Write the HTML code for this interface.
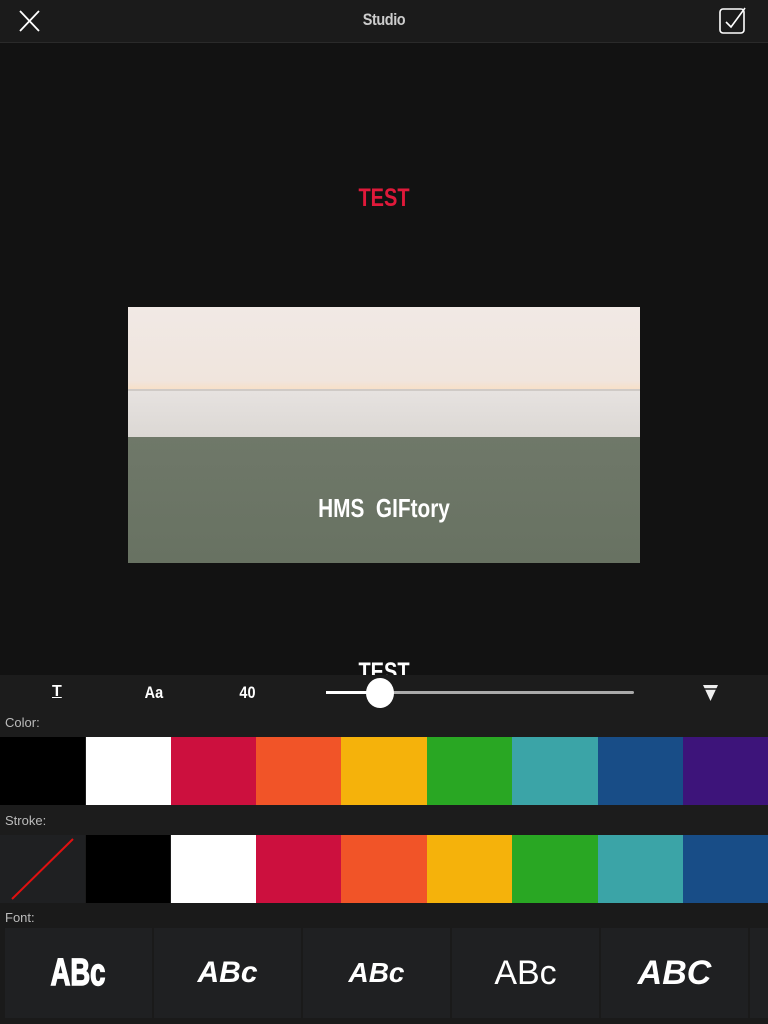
<!DOCTYPE html>
<html><head><meta charset="utf-8"><style>
*{margin:0;padding:0;box-sizing:border-box}
body{width:768px;height:1024px;background:#121212;position:relative;overflow:hidden;font-family:"Liberation Sans",sans-serif;color:#fff}
.abs{position:absolute}
.cond{font-family:"Liberation Sans Narrow","Liberation Sans",sans-serif;font-weight:bold}
.sw{position:absolute;height:68px}
.lbl{position:absolute;left:5px;font-size:13px;color:#bbb}
.ft{position:absolute;top:928px;width:147px;height:90px;background:#1f2022;display:flex;align-items:center;justify-content:center;font-size:34px;color:#fff}
</style></head><body>
<div class="abs" style="left:0;top:0;width:768px;height:43px;background:#1b1b1b;border-bottom:1px solid #2a2a2a"></div>
<svg class="abs" style="left:18px;top:10px" width="24" height="22"><path d="M2 1L21 21M21 1L2 21" stroke="#fff" stroke-width="1.8"/></svg>
<div class="abs cond" style="left:0;width:768px;top:10px;text-align:center;font-size:17px;color:#ccc;letter-spacing:-0.5px;transform:scaleX(0.85)">Studio</div>
<svg class="abs" style="left:718px;top:6px" width="30" height="30"><rect x="2" y="3" width="24" height="24" rx="3" fill="none" stroke="#fff" stroke-width="1.6"/><path d="M8 16L13 21L27 2" fill="none" stroke="#fff" stroke-width="1.6"/></svg>
<div class="abs cond" style="left:0;width:768px;top:184px;text-align:center;font-size:25px;color:#e0193a;transform:scaleX(0.8)">TEST</div>
<div class="abs" style="left:128px;top:307px;width:512px;height:256px;overflow:hidden;background:#6c7668">
<div class="abs" style="left:0;top:0;width:512px;height:82px;background:linear-gradient(#f1e9e5,#f0e5dd 90%,#f7e0c8)"></div>
<div class="abs" style="left:0;top:82px;width:512px;height:48px;background:linear-gradient(#e6e2e0,#dcd8d4);border-top:2px solid #cfcac6"></div>
<div class="abs" style="left:0;top:130px;width:512px;height:126px;background:linear-gradient(#6f7869,#687262)"></div>
<div class="abs cond" style="left:0;width:512px;top:186px;text-align:center;font-size:26px;color:#fff;transform:scaleX(0.8)">HMS&nbsp; GIFtory</div>
</div>
<div class="abs cond" style="left:0;width:768px;top:658px;height:17px;overflow:hidden;text-align:center;font-size:25px;line-height:28px;transform:scaleX(0.8)">TEST</div>
<div class="abs" style="left:0;top:675px;width:768px;height:228px;background:#1c1c1c"></div>
<div class="abs cond" style="left:52px;top:683px;font-size:16px;text-decoration:underline">T</div>
<div class="abs cond" style="left:143px;top:683px;font-size:17px;transform:scaleX(0.85)">Aa</div>
<div class="abs cond" style="left:238px;top:683px;font-size:17px;transform:scaleX(0.85)">40</div>
<div class="abs" style="left:326px;top:691px;width:308px;height:3px;background:#aaa;border-radius:2px"></div>
<div class="abs" style="left:326px;top:691px;width:50px;height:3px;background:#fff"></div>
<div class="abs" style="left:366px;top:678px;width:28px;height:30px;border-radius:50%;background:#fff"></div>
<svg class="abs" style="left:702px;top:684px" width="17" height="18"><path d="M1 1H16L8.5 17Z" fill="#eee"/><path d="M1 5H16" stroke="#1c1c1c" stroke-width="1.5"/></svg>
<div class="lbl" style="top:715px">Color:</div>
<div class="sw" style="left:0;top:737px;width:85px;background:#000"></div>
<div class="sw" style="left:86px;top:737px;width:85px;background:#fff"></div>
<div class="sw" style="left:171px;top:737px;width:85px;background:#cc103e"></div>
<div class="sw" style="left:256px;top:737px;width:85px;background:#f15428"></div>
<div class="sw" style="left:341px;top:737px;width:86px;background:#f5b20b"></div>
<div class="sw" style="left:427px;top:737px;width:85px;background:#29a723"></div>
<div class="sw" style="left:512px;top:737px;width:86px;background:#3ba4a7"></div>
<div class="sw" style="left:598px;top:737px;width:85px;background:#184d87"></div>
<div class="sw" style="left:683px;top:737px;width:85px;background:#3d147a"></div>
<div class="lbl" style="top:813px">Stroke:</div>
<div class="sw" style="left:0;top:835px;width:85px;background:#1f2022"></div>
<svg class="abs" style="left:0;top:835px" width="85" height="68"><path d="M12 64L73 4" stroke="#e01010" stroke-width="2"/></svg>
<div class="sw" style="left:86px;top:835px;width:84px;background:#000"></div>
<div class="sw" style="left:171px;top:835px;width:85px;background:#fff"></div>
<div class="sw" style="left:256px;top:835px;width:85px;background:#cc103e"></div>
<div class="sw" style="left:341px;top:835px;width:86px;background:#f15428"></div>
<div class="sw" style="left:427px;top:835px;width:85px;background:#f5b20b"></div>
<div class="sw" style="left:512px;top:835px;width:86px;background:#29a723"></div>
<div class="sw" style="left:598px;top:835px;width:85px;background:#3ba4a7"></div>
<div class="sw" style="left:683px;top:835px;width:85px;background:#184d87"></div>
<div class="abs" style="left:0;top:903px;width:768px;height:121px;background:#1a1a1a"></div>
<div class="lbl" style="top:910px">Font:</div>
<div class="ft" style="left:5px;font-weight:bold;font-size:38px"><span style="transform:scaleX(0.72);display:inline-block;-webkit-text-stroke:1.5px #fff">ABc</span></div>
<div class="ft" style="left:154px;font-weight:bold;font-style:italic;font-size:30px">ABc</div>
<div class="ft" style="left:303px;font-weight:bold;font-style:italic;font-size:28px">ABc</div>
<div class="ft" style="left:452px;font-size:34px">ABc</div>
<div class="ft" style="left:601px;font-weight:bold;font-style:italic;font-size:34px">ABC</div>
<div class="ft" style="left:750px;width:20px"></div>
</body></html>
